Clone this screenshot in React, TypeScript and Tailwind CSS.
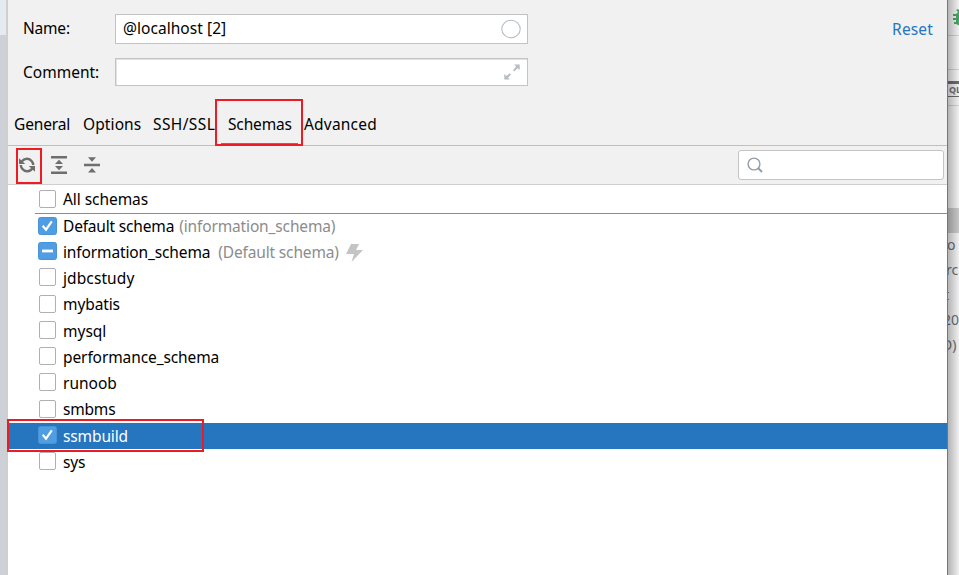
import React from "react";

type State = "off" | "on" | "mixed";

function Box({ state }: { state: State }) {
  if (state === "off") {
    return <span className="ml-px mr-px h-[18px] w-[17px] shrink-0 rounded-[2px] border border-[#b0b0b0] bg-white" />;
  }
  return (
    <svg className="h-[18px] w-[19px] shrink-0" viewBox="0 0 19 18">
      <rect x="0.5" y="0.5" width="18" height="17" rx="2" fill="#4f9ee3" stroke="#4793d6" />
      {state === "on" ? (
        <path d="M4.7 8.8 8 12.6 13.8 4.4" fill="none" stroke="#fff" strokeWidth="2.2" />
      ) : (
        <path d="M4 9H15" stroke="#fff" strokeWidth="2.8" />
      )}
    </svg>
  );
}

type Row = {
  name: string;
  h: string;
  text: string;
  state: State;
  note?: string;
  noteText?: string;
  bolt?: boolean;
  selected?: boolean;
};

const rows: Row[] = [
  { name: "Default schema", h: "h-[25px]", text: "-mt-[2px] tracking-[-0.18px]", state: "on", note: "(information_schema)", noteText: "-mt-[2px] ml-[5px] tracking-[-0.14px]" },
  { name: "information_schema", h: "h-[26px]", text: "-mt-px tracking-[-0.13px]", state: "mixed", note: "(Default schema)", noteText: "-mt-px ml-[8px] tracking-[-0.16px]", bolt: true },
  { name: "jdbcstudy", h: "h-[27px]", text: "-mt-px tracking-[0.1px]", state: "off" },
  { name: "mybatis", h: "h-[26px]", text: "-mt-[2px] tracking-[-0.1px]", state: "off" },
  { name: "mysql", h: "h-[26px]", text: "-mt-px", state: "off" },
  { name: "performance_schema", h: "h-[26px]", text: "-mt-px tracking-[-0.1px]", state: "off" },
  { name: "runoob", h: "h-[27px]", text: "-mt-px", state: "off" },
  { name: "smbms", h: "h-[26px]", text: "-mt-[2px] tracking-[-0.2px]", state: "off" },
  { name: "ssmbuild", h: "h-[26px]", text: "-mt-px tracking-[-0.12px]", state: "on", selected: true },
  { name: "sys", h: "h-[26px]", text: "-mt-px tracking-[-0.2px]", state: "off" },
];

const tabs = [
  { name: "General", w: "w-[69px] tracking-[-0.14px]" },
  { name: "Options", w: "w-[70px] tracking-[0.1px]" },
  { name: "SSH/SSL", w: "w-[75px] tracking-[0.4px]" },
  { name: "Schemas", w: "w-[76px] tracking-[-0.14px]" },
  { name: "Advanced", w: "w-[80px] tracking-[0.2px]" },
];

const editorFragments = [
  { text: "to", shift: "-ml-[6px]" },
  { text: "rc", shift: "-ml-[2px]" },
  { text: "t", shift: "-ml-[4px]" },
  { text: "20", shift: "-ml-[5px]" },
  { text: "D)", shift: "-ml-[6px]" },
];

export default function App() {
  return (
    <div className="relative flex h-[575px] w-[959px] overflow-hidden bg-[#f1f1f1] font-['Noto_Sans','Open_Sans',sans-serif] text-[15.5px] leading-[22px] text-black">
      <div className="flex w-[6px] shrink-0 flex-col bg-[#cdd0d6]">
        <div className="h-[35px] bg-[#e4eaef]" />
      </div>
      <div className="w-[2px] shrink-0 bg-[#cfcfcf]" />

      <main className="flex w-[939px] shrink-0 flex-col bg-[#f1f1f1]">
        <section className="flex h-[100px] pt-[14px]">
          <div className="w-[107px] pl-[15px]">
            <div className="flex h-[30px] items-center pb-[2px] tracking-[-0.2px]">Name:</div>
            <div className="mt-[14px] flex h-[28px] items-center">Comment:</div>
          </div>
          <div className="w-[412.5px]">
            <div className="flex h-[30px] items-center justify-between border border-[#c2c2c2] bg-white pl-[7px] pr-[6px]">
              <span className="-mt-[2px] tracking-[0.05px]">@localhost [2]</span>
              <svg className="h-5 w-5" viewBox="0 0 20 20"><ellipse cx="10" cy="10" rx="9.2" ry="8.8" fill="none" stroke="#b6bec4" strokeWidth="1.1" /></svg>
            </div>
            <div className="mt-[14px] flex h-[28px] items-center justify-end border border-[#c4c4c4] bg-white pr-[7px] shadow-[inset_1px_1px_0_#e2e2e2]">
              <svg className="h-4 w-4" viewBox="0 0 16 16" fill="#b7bdc2"><path d="M10 .5H15.7V6L13.6 4.2 10.1 7.4 9 6.3 12.1 2.6ZM.3 10V15.5H6L4.1 13.7 7 10.6 5.8 9.2 2.4 12Z" /></svg>
            </div>
          </div>
          <div className="flex h-[30px] flex-1 items-center justify-end pr-[14px] text-[#2675bf]">
            <span className="tracking-[0.15px]">Reset</span>
          </div>
        </section>

        <nav className="flex h-[46px] border-b border-[#bfbfbf] pl-[6px] pt-[13px]">
          {tabs.map((t) => (
            <div key={t.name} className={`shrink-0 whitespace-nowrap ${t.w}`}>{t.name}</div>
          ))}
        </nav>

        <div className="flex h-[39px] items-center border-b border-[#cfcfcf] pl-[11px] pr-[3px]">
          <svg className="h-4 w-4" viewBox="0 0 16 16">
            <path d="M2.2 5.8C4 1.3 9.8.4 12.8 4.2 13.8 5.4 14.2 6.6 14.2 8M13.8 10.5C12 14.8 6.2 15.6 3.2 11.8 2.2 10.6 1.8 9.4 1.8 8" fill="none" stroke="#6e6e6e" strokeWidth="2.4" />
            <path d="M0 1.2V7H6.2ZM16 14.8V9H9.8Z" fill="#6e6e6e" />
          </svg>
          <svg className="ml-[16px] h-[18px] w-4" viewBox="0 0 16 18" fill="#6e6e6e">
            <path d="M0 0H16V2.5H0ZM0 15.5H16V18H0ZM8 3.8 12 8H4ZM8 14.2 4 10H12Z" />
          </svg>
          <svg className="ml-[17px] h-4 w-4" viewBox="0 0 16 16" fill="#6e6e6e">
            <path d="M0 6.7H16V9.2H0ZM8 4.8 4 .3H12ZM8 11 12 15.5H4Z" />
          </svg>
          <div className="ml-auto flex h-[30px] w-[206px] items-center rounded-[3px] border border-[#c4c4c4] bg-white pl-[8px]">
            <svg className="h-4 w-4" viewBox="0 0 16 16" fill="none" stroke="#929da6"><circle cx="7" cy="7" r="5.9" strokeWidth="1.4" /><path d="M11 11 15 15" strokeWidth="2" /></svg>
          </div>
        </div>

        <section className="flex flex-1 flex-col bg-white">
          <div className="flex h-[28px] items-start pl-[30px] pt-[5px]">
            <Box state="off" />
            <span className="-mt-[2px] ml-[6px] tracking-[-0.06px]">All schemas</span>
          </div>
          <div className="ml-[27px] h-px shrink-0 bg-[#8c8c8c]" />
          {rows.map((r) => (
            <div key={r.name} className={`flex shrink-0 items-start pl-[30px] pt-[3px] ${r.h} ${r.selected ? "bg-[#2675bf] text-white" : ""}`}>
              <Box state={r.state} />
              <span className={`ml-[6px] ${r.text}`}>{r.name}</span>
              {r.note && <span className={`text-[#8c8c8c] ${r.noteText}`}>{r.note}</span>}
              {r.bolt && (
                <svg className="ml-[7px] mt-[2px] h-[18px] w-[17px]" viewBox="0 0 17 18" fill="#c4c4c4"><path d="M5 0H13L10 6H17L5.5 18 8 10H0Z" /></svg>
              )}
            </div>
          ))}
        </section>
      </main>

      <aside className="relative flex w-[12px] shrink-0 flex-col overflow-hidden border-l border-[#777] bg-[#f0f0f0] text-[14px] text-[#666d78]">
        <div className="h-[36px] border-b border-[#cfcfcf]">
          <svg className="ml-[5px] mt-[9px] h-[18px] w-[18px]" viewBox="0 0 18 18" fill="#4aa365"><path d="M5 3 3 1 5 0 8 2H10L13 0 14 2 12 4 14 6H18V8H15V10H18V12H15L13 16 9 18 5 16 3 15H1V13H3V11H0V9H3V7H0V5H3Z" /></svg>
        </div>
        <div className="h-[34px] border-b border-[#cfcfcf]" />
        <div className="mt-[11px] h-[16px] border-b border-t-[3px] border-[#6b6b6b] pl-[1px] text-[9px] font-bold leading-[12px]">QL</div>
        <div className="h-[9px] border-b border-[#cfcfcf]" />
        <div className="mt-[102px] h-[25px] shrink-0 bg-[#c6c6c6]" />
        <div className="-mt-px flex flex-col leading-[25px]">
          {editorFragments.map((f) => (
            <span key={f.text} className={f.shift}>{f.text}</span>
          ))}
        </div>
        <div className="absolute inset-0 bg-gradient-to-r from-black/25 to-transparent" />
      </aside>

      <div className="absolute left-[215px] top-[99px] h-[47px] w-[88px] border-2 border-[#ed1c24]" />
      <div className="absolute left-[221px] top-[143px] h-px w-[77px] bg-[#4083c9]" />
      <div className="absolute left-[16px] top-[148px] h-[36px] w-[26px] border-2 border-[#ed1c24]" />
      <div className="absolute left-[7px] top-[419px] h-[33px] w-[197px] border-2 border-[#ed1c24]" />
    </div>
  );
}
